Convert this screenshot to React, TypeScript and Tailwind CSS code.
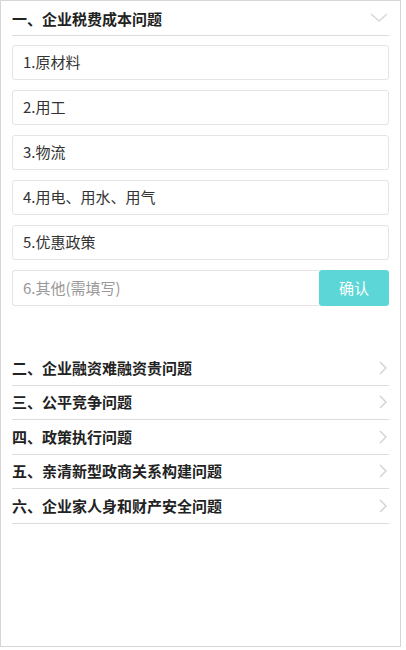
import {useState} from 'react'

const options = ['1.原材料', '2.用工', '3.物流', '4.用电、用水、用气', '5.优惠政策']

const sections = [
  '二、企业融资难融资贵问题',
  '三、公平竞争问题',
  '四、政策执行问题',
  '五、亲清新型政商关系构建问题',
  '六、企业家人身和财产安全问题',
]

function ChevronDown() {
  return (
    <svg width="18" height="10" viewBox="0 0 18 10" fill="none">
      <path d="M1 1l8 7 8-7" stroke="#d8d8d8" strokeWidth="1.5" />
    </svg>
  )
}

function ChevronRight() {
  return (
    <svg width="8" height="14" viewBox="0 0 8 14" fill="none">
      <path d="M1 1l6 6-6 6" stroke="#d4d4d4" strokeWidth="1.5" />
    </svg>
  )
}

export default function App() {
  const [other, setOther] = useState('')

  return (
    <div
      className="w-[401px] h-[647px] bg-white border border-[#d6d6d6] px-[11px] text-[#222]"
      style={{fontFamily: '"Noto Sans CJK SC", "Noto Sans", sans-serif'}}
    >
      {/* open section */}
      <div className="flex items-center justify-between h-[35px] pt-[2px] border-b border-[#dcdcdc]">
        <span className="text-[15px] font-bold">一、企业税费成本问题</span>
        <span className="mr-[1px] -mt-[2px]">
          <ChevronDown />
        </span>
      </div>

      <div className="flex flex-col gap-[10px] mt-[9px]">
        {options.map(o => (
          <div
            key={o}
            className="h-[35px] flex items-center px-[10px] border border-[#e4e4e4] rounded-[3px] text-[15px] text-[#333]"
          >
            {o}
          </div>
        ))}
        <div className="h-[36px] flex">
          <input
            value={other}
            onChange={e => setOther(e.target.value)}
            placeholder="6.其他(需填写)"
            className="flex-1 min-w-0 px-[10px] border border-[#e4e4e4] border-r-0 rounded-l-[3px] text-[15px] text-[#333] placeholder:text-[#999] outline-none"
          />
          <button className="w-[70px] bg-[#5cd6d6] text-white text-[15px] rounded-[3px]">确认</button>
        </div>
      </div>

      <div className="mt-[45px]">
        {sections.map(s => (
          <div
            key={s}
            className="flex items-center justify-between h-[34.5px] border-b border-[#dcdcdc]"
          >
            <span className="text-[15px] font-bold">{s}</span>
            <span className="mr-[2px]">
              <ChevronRight />
            </span>
          </div>
        ))}
      </div>
    </div>
  )
}
